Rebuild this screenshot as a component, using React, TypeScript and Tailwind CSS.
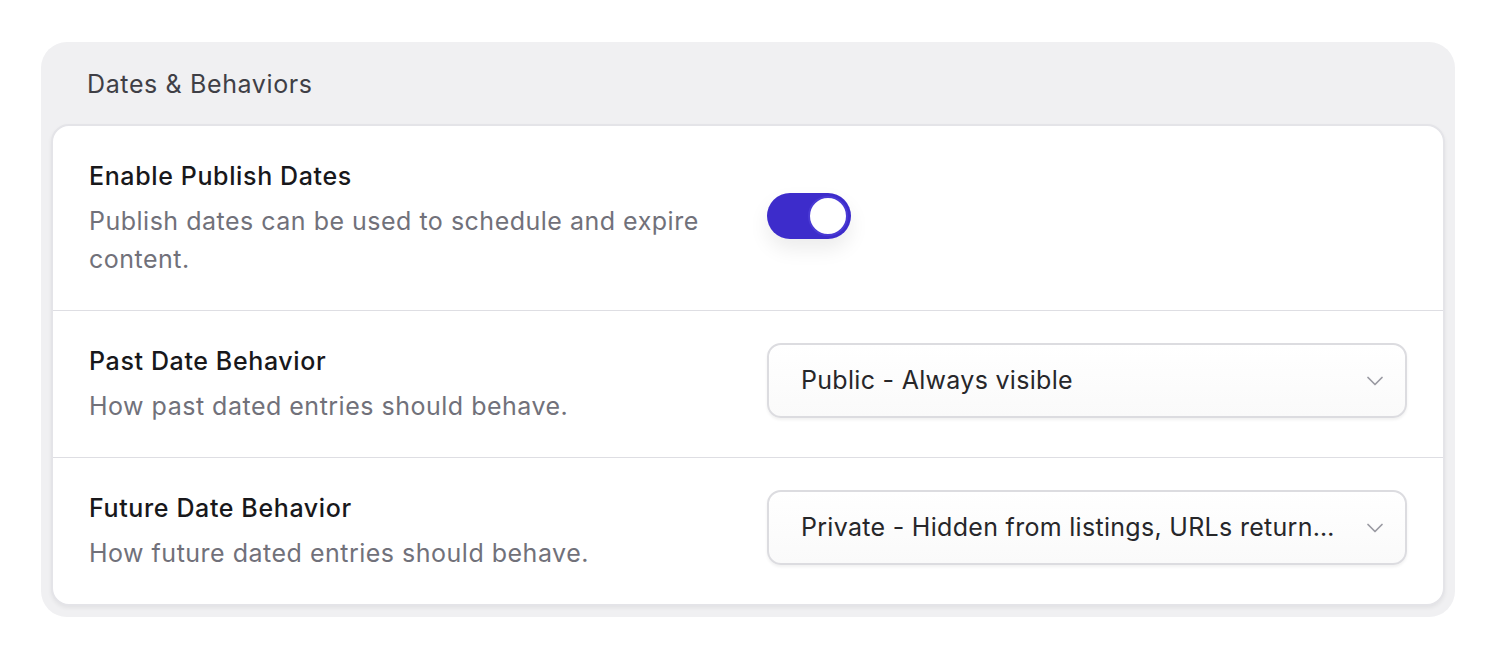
import { ChevronDown } from 'lucide-react';

const font = { fontFamily: 'Inter, "Noto Sans", sans-serif' };

function Row({ title, desc, children, last }: { title: string; desc: string; children: React.ReactNode; last?: boolean }) {
  return (
    <div className={`grid grid-cols-2 gap-[38px] items-start px-9 py-8 ${last ? '' : 'border-b border-[#dedee3]'}`}>
      <div>
        <div className="text-[25px] leading-[36px] tracking-[0.025em] font-medium text-[#18181b]">{title}</div>
        <div className="mt-2 text-[25px] leading-[38px] tracking-[0.02em] text-[#71717a]">{desc}</div>
      </div>
      <div>{children}</div>
    </div>
  );
}

function Select({ value }: { value: string }) {
  return (
    <div className="flex items-center h-[75px] w-full rounded-[14px] border-2 border-[#dcdce0] bg-gradient-to-b from-white to-[#fafafa] shadow-[0_2px_3px_rgba(0,0,0,0.06)] pl-8 pr-4">
      <span className="flex-1 truncate text-[25px] tracking-[0.012em] text-[#27272a]">{value}</span>
      <ChevronDown className="ml-5 w-7 h-7 text-[#9a9aa2]" strokeWidth={1.5} />
    </div>
  );
}

export default function App() {
  return (
    <div className="min-h-[656px] bg-white pt-[42px] px-[41px]" style={font}>
      <div className="w-[1414px] rounded-[26px] bg-[#f0f0f2] px-[10px] pb-[11px]">
        <h2 className="px-9 pt-[26px] pb-[24px] text-[25px] leading-[32px] tracking-[0.025em] text-[#3f3f46]">Dates &amp; Behaviors</h2>
        <div className="rounded-[18px] border-2 border-[#e4e4e8] bg-white shadow-[0_2px_4px_rgba(0,0,0,0.06)]">
          <Row title="Enable Publish Dates" desc="Publish dates can be used to schedule and expire content.">
            <div className="relative mt-[35px] w-[84px] h-[46px] rounded-full bg-[#3d2ccb] shadow-[0_10px_20px_rgba(0,0,0,0.08)]">
              <div className="absolute right-[3px] top-[3px] w-[40px] h-[40px] rounded-full bg-white border-2 border-[#4a3ad4]" />
            </div>
          </Row>
          <Row title="Past Date Behavior" desc="How past dated entries should behave.">
            <Select value="Public - Always visible" />
          </Row>
          <Row title="Future Date Behavior" desc="How future dated entries should behave." last>
            <Select value="Private - Hidden from listings, URLs return 404" />
          </Row>
        </div>
      </div>
    </div>
  );
}
